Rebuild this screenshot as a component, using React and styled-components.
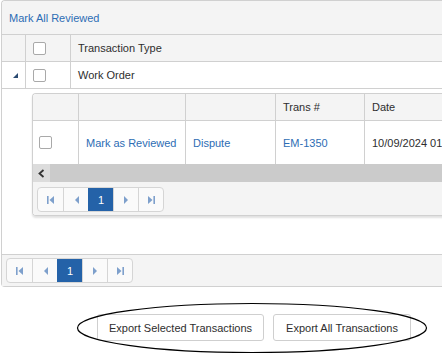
import React from 'react';
import styled, { createGlobalStyle, css } from 'styled-components';

const GlobalStyle = createGlobalStyle`
  html, body {
    margin: 0;
    padding: 0;
    background: #fff;
  }
  body {
    font-family: 'Liberation Sans', Arial, sans-serif;
    font-size: 11px;
    color: #2e2e2e;
  }
`;

const Page = styled.div`
  position: relative;
  width: 442px;
  height: 354px;
  overflow: hidden;
`;

const Grid = styled.div`
  width: 470px;
  margin-left: 1px;
  border: 1px solid #d0d0d0;
  border-right: none;
  border-radius: 4px 0 0 4px;
  background: #fff;
`;

const Toolbar = styled.div`
  height: 34px;
  box-sizing: border-box;
  display: flex;
  align-items: center;
  padding-left: 7px;
  background: #f4f4f4;
  border-bottom: 1px solid #d0d0d0;
  border-radius: 4px 0 0 0;
`;

const Link = styled.a`
  color: #2d6db4;
  text-decoration: none;
  cursor: pointer;
`;

const Row = styled.div`
  display: grid;
  grid-template-columns: ${({ cols }) => cols};
  height: ${({ h }) => h}px;
  box-sizing: border-box;
  background: ${({ head }) => (head ? '#f4f4f4' : '#fff')};
  ${({ divider }) =>
    divider &&
    css`
      border-bottom: 1px solid #d0d0d0;
    `}
`;

const Cell = styled.div`
  display: flex;
  align-items: center;
  box-sizing: border-box;
  padding-left: ${({ pad }) => pad ?? 7}px;
  white-space: nowrap;
  overflow: hidden;
  ${({ line }) =>
    line &&
    css`
      border-left: 1px solid #d0d0d0;
    `}
`;

const Check = styled.span`
  display: inline-block;
  width: 11px;
  height: 11px;
  border: 1px solid #a9a9a9;
  border-radius: 2px;
  background: #fff;
`;

const Content = styled.div`
  height: 192px;
`;

const DetailRow = styled.div`
  display: flex;
  padding: 4px 0 0 30px;
`;

const Nested = styled.div`
  flex: 1;
  border: 1px solid #d0d0d0;
  border-right: none;
  border-radius: 4px 0 0 4px;
  box-shadow: 0 2px 2px rgba(0, 0, 0, 0.12);
  overflow: hidden;
`;

const ScrollBar = styled.div`
  display: flex;
  height: 18px;
  background: #cbcbcb;
`;

const ScrollArrow = styled.div`
  width: 17px;
  display: flex;
  align-items: center;
  justify-content: center;
  background: #dcdcdc;
`;

const Pager = styled.div`
  height: ${({ h }) => h}px;
  box-sizing: border-box;
  padding: ${({ top }) => top}px 0 0 4px;
  background: #f4f4f4;
  ${({ topLine }) =>
    topLine &&
    css`
      border-top: 1px solid #d0d0d0;
    `}
`;

const PagerGroup = styled.div`
  display: inline-flex;
  height: 25px;
  box-sizing: border-box;
  border: 1px solid #d5d5d5;
  border-radius: 4px;
  overflow: hidden;
  background: #fafafa;
`;

const PageBtn = styled.div`
  width: 25px;
  display: flex;
  align-items: center;
  justify-content: center;
  box-sizing: border-box;
  color: #fff;
  font-size: 11px;
  & + & {
    border-left: 1px solid #d5d5d5;
  }
  ${({ active }) =>
    active &&
    css`
      background: #2462a8;
      border-color: #2462a8 !important;
    `}
`;

const Actions = styled.div`
  display: flex;
  gap: 9px;
  padding: 27px 0 0 97px;
`;

const Button = styled.button`
  height: 27px;
  padding: 0 ${({ px }) => px}px;
  font-family: inherit;
  font-size: 11px;
  color: #2e2e2e;
  background: #fff;
  border: 1px solid #cfcfcf;
  border-radius: 3px;
`;

const Annotation = styled.svg`
  position: absolute;
  left: 75px;
  top: 301px;
  pointer-events: none;
`;

const Tri = ({ dir }) => (
  <svg width="5" height="8" viewBox="0 0 5 8">
    <polygon
      points={dir === 'left' ? '5,0 5,8 1,4' : '0,0 0,8 4,4'}
      fill="#7ea0cc"
    />
  </svg>
);

const Edge = ({ dir }) => (
  <svg width="8" height="8" viewBox="0 0 8 8">
    {dir === 'left' ? (
      <>
        <rect x="0" y="0" width="1.6" height="8" fill="#7ea0cc" />
        <polygon points="7,0 7,8 2.5,4" fill="#7ea0cc" />
      </>
    ) : (
      <>
        <polygon points="1,0 1,8 5.5,4" fill="#7ea0cc" />
        <rect x="6.4" y="0" width="1.6" height="8" fill="#7ea0cc" />
      </>
    )}
  </svg>
);

const PagerButtons = () => (
  <PagerGroup>
    <PageBtn><Edge dir="left" /></PageBtn>
    <PageBtn><Tri dir="left" /></PageBtn>
    <PageBtn active>1</PageBtn>
    <PageBtn><Tri dir="right" /></PageBtn>
    <PageBtn><Edge dir="right" /></PageBtn>
  </PagerGroup>
);

const outerCols = '23px 45px 1fr';
const nestedCols = '45px 107px 90px 89px 1fr';

export default function App() {
  return (
    <Page>
      <GlobalStyle />
      <Grid>
        <Toolbar>
          <Link>Mark All Reviewed</Link>
        </Toolbar>

        <Row cols={outerCols} h={27} head divider>
          <Cell />
          <Cell line pad={7}><Check /></Cell>
          <Cell line>Transaction Type</Cell>
        </Row>

        <Content>
          <Row cols={outerCols} h={27} divider>
            <Cell pad={11}>
              <svg width="5" height="5" viewBox="0 0 5 5">
                <polygon points="0,5 5,0 5,5" fill="#2b4b72" />
              </svg>
            </Cell>
            <Cell line pad={7}><Check /></Cell>
            <Cell line>Work Order</Cell>
          </Row>

          <DetailRow>
            <Nested>
              <Row cols={nestedCols} h={27} head divider>
                <Cell />
                <Cell line />
                <Cell line />
                <Cell line>Trans #</Cell>
                <Cell line>Date</Cell>
              </Row>
              <Row cols={nestedCols} h={43}>
                <Cell pad={6}><Check /></Cell>
                <Cell line><Link>Mark as Reviewed</Link></Cell>
                <Cell line><Link>Dispute</Link></Cell>
                <Cell line><Link>EM-1350</Link></Cell>
                <Cell line>10/09/2024 01:15 PM</Cell>
              </Row>
              <ScrollBar>
                <ScrollArrow>
                  <svg width="7" height="9" viewBox="0 0 7 9">
                    <polyline
                      points="5.5,1 1.5,4.5 5.5,8"
                      fill="none"
                      stroke="#333"
                      strokeWidth="1.8"
                    />
                  </svg>
                </ScrollArrow>
              </ScrollBar>
              <Pager h={33} top={5}>
                <PagerButtons />
              </Pager>
            </Nested>
          </DetailRow>
        </Content>

        <Pager h={32} top={3} topLine>
          <PagerButtons />
        </Pager>
      </Grid>

      <Actions>
        <Button px={11}>Export Selected Transactions</Button>
        <Button px={12}>Export All Transactions</Button>
      </Actions>

      <Annotation width="354" height="54" viewBox="0 0 354 54">
        <ellipse
          cx="177"
          cy="27"
          rx="174.5"
          ry="24.5"
          fill="none"
          stroke="#000"
          strokeWidth="1.2"
        />
      </Annotation>
    </Page>
  );
}
